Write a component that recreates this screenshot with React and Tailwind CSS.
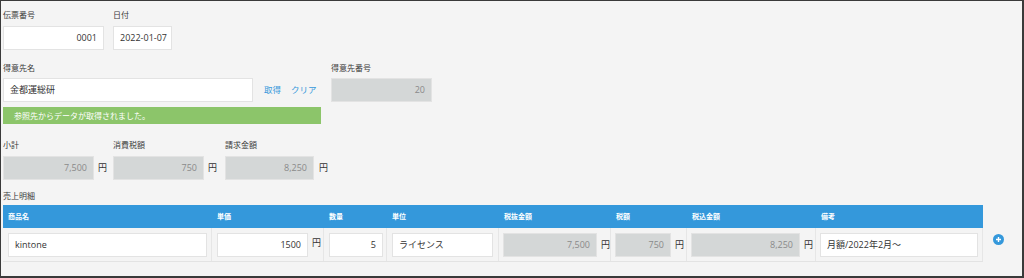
import React from 'react';

const font = { fontFamily: '"Open Sans", "Noto Sans CJK JP", sans-serif' };

function Label({ children, className = '' }) {
  return <div className={`h-[14px] text-[8px] leading-[14px] text-[#3a3a3a] ${className}`}>{children}</div>;
}

function Box({ value, w, gray, right, className = '' }) {
  return (
    <div
      className={`h-[24px] flex items-center px-[6px] text-[9px] whitespace-nowrap border border-[#e3e3e3] ${
        gray ? 'bg-[#d4d7d7] text-[#8a8a8a]' : 'bg-white text-[#333]'
      } ${right ? 'justify-end' : ''} ${className}`}
      style={{ width: w }}
    >
      {value}
    </div>
  );
}

function Yen({ className = '' }) {
  return <span className={`text-[9px] text-[#333] ${className}`}>円</span>;
}

const cols = [
  { label: '商品名', w: 209 },
  { label: '単価', w: 112 },
  { label: '数量', w: 63 },
  { label: '単位', w: 112 },
  { label: '税抜金額', w: 112 },
  { label: '税額', w: 76 },
  { label: '税込金額', w: 129 },
  { label: '備考', w: 167 },
];

export default function App() {
  return (
    <div
      className="w-[1024px] h-[278px] bg-[#f4f4f4] border-t border-l border-r-2 border-b-2 border-[#3a3a3a] pl-[2px] pt-[7px] overflow-hidden"
      style={font}
    >
      {/* row 1 */}
      <div className="flex gap-[9px]">
        <div>
          <Label>伝票番号</Label>
          <Box value="0001" w={101} right className="mt-[4px]" />
        </div>
        <div>
          <Label>日付</Label>
          <Box value="2022-01-07" w={59} className="mt-[4px]" />
        </div>
      </div>

      {/* row 2 */}
      <div className="flex mt-[11px]">
        <div>
          <Label>得意先名</Label>
          <div className="flex items-center mt-[3px]">
            <Box value="金都運総研" w={250} />
            <span className="ml-[11px] text-[8.5px] text-[#3498db]">取得</span>
            <span className="ml-[10px] text-[8.5px] text-[#3498db]">クリア</span>
          </div>
          <div className="mt-[5px] w-[318px] h-[17px] bg-[#8cc56a] text-white text-[8px] leading-[17px] pl-[11px]">
            参照先からデータが取得されました。
          </div>
        </div>
        <div className="ml-[10px]">
          <Label>得意先番号</Label>
          <Box value="20" w={101} gray right className="mt-[3px]" />
        </div>
      </div>

      {/* row 3 */}
      <div className="flex mt-[14px]">
        <div className="w-[110px]">
          <Label>小計</Label>
          <div className="flex items-center mt-[4px]">
            <Box value="7,500" w={91} gray right />
            <Yen className="ml-[4px]" />
          </div>
        </div>
        <div className="w-[112px]">
          <Label>消費税額</Label>
          <div className="flex items-center mt-[4px]">
            <Box value="750" w={91} gray right />
            <Yen className="ml-[4px]" />
          </div>
        </div>
        <div>
          <Label>請求金額</Label>
          <div className="flex items-center mt-[4px]">
            <Box value="8,250" w={89} gray right />
            <Yen className="ml-[5px]" />
          </div>
        </div>
      </div>

      {/* detail table */}
      <Label className="mt-[9px]">売上明細</Label>
      <div className="flex items-start mt-[2px]">
        <div>
          <div className="flex h-[23px] bg-[#3498db]">
            {cols.map((c) => (
              <div
                key={c.label}
                className="text-[7px] font-bold text-white leading-[23px] pl-[5px]"
                style={{ width: c.w }}
              >
                {c.label}
              </div>
            ))}
          </div>
          <div className="flex h-[34px] border-b border-[#e3e3e3]">
            <div className="w-[209px] flex items-center pl-[5px] border-r border-[#e6e6e6]">
              <Box value="kintone" w={199} />
            </div>
            <div className="w-[112px] flex items-center pl-[5px] border-r border-[#e6e6e6]">
              <Box value="1500" w={91} right />
              <Yen className="ml-[4px] -mt-[4px]" />
            </div>
            <div className="w-[63px] flex items-center pl-[5px] border-r border-[#e6e6e6]">
              <Box value="5" w={54} right />
            </div>
            <div className="w-[112px] flex items-center pl-[5px] border-r border-[#e6e6e6]">
              <Box value="ライセンス" w={101} />
            </div>
            <div className="w-[112px] flex items-center pl-[4px] border-r border-[#e6e6e6]">
              <Box value="7,500" w={101} gray right />
              <Yen className="ml-[4px]" />
            </div>
            <div className="w-[76px] flex items-center pl-[4px] border-r border-[#e6e6e6]">
              <Box value="750" w={56} gray right />
              <Yen className="ml-[4px]" />
            </div>
            <div className="w-[129px] flex items-center pl-[4px] border-r border-[#e6e6e6]">
              <Box value="8,250" w={109} gray right />
              <Yen className="ml-[4px]" />
            </div>
            <div className="w-[167px] flex items-center pl-[4px] border-r border-[#e6e6e6]">
              <Box value="月額/2022年2月～" w={158} className="px-[5px]" />
            </div>
          </div>
        </div>
        <svg className="ml-[10px] mt-[29px]" width="11" height="11" viewBox="0 0 11 11">
          <circle cx="5.5" cy="5.5" r="5.5" fill="#3498db" />
          <path d="M5.5 3v5M3 5.5h5" stroke="#fff" strokeWidth="1.4" />
        </svg>
      </div>
    </div>
  );
}
